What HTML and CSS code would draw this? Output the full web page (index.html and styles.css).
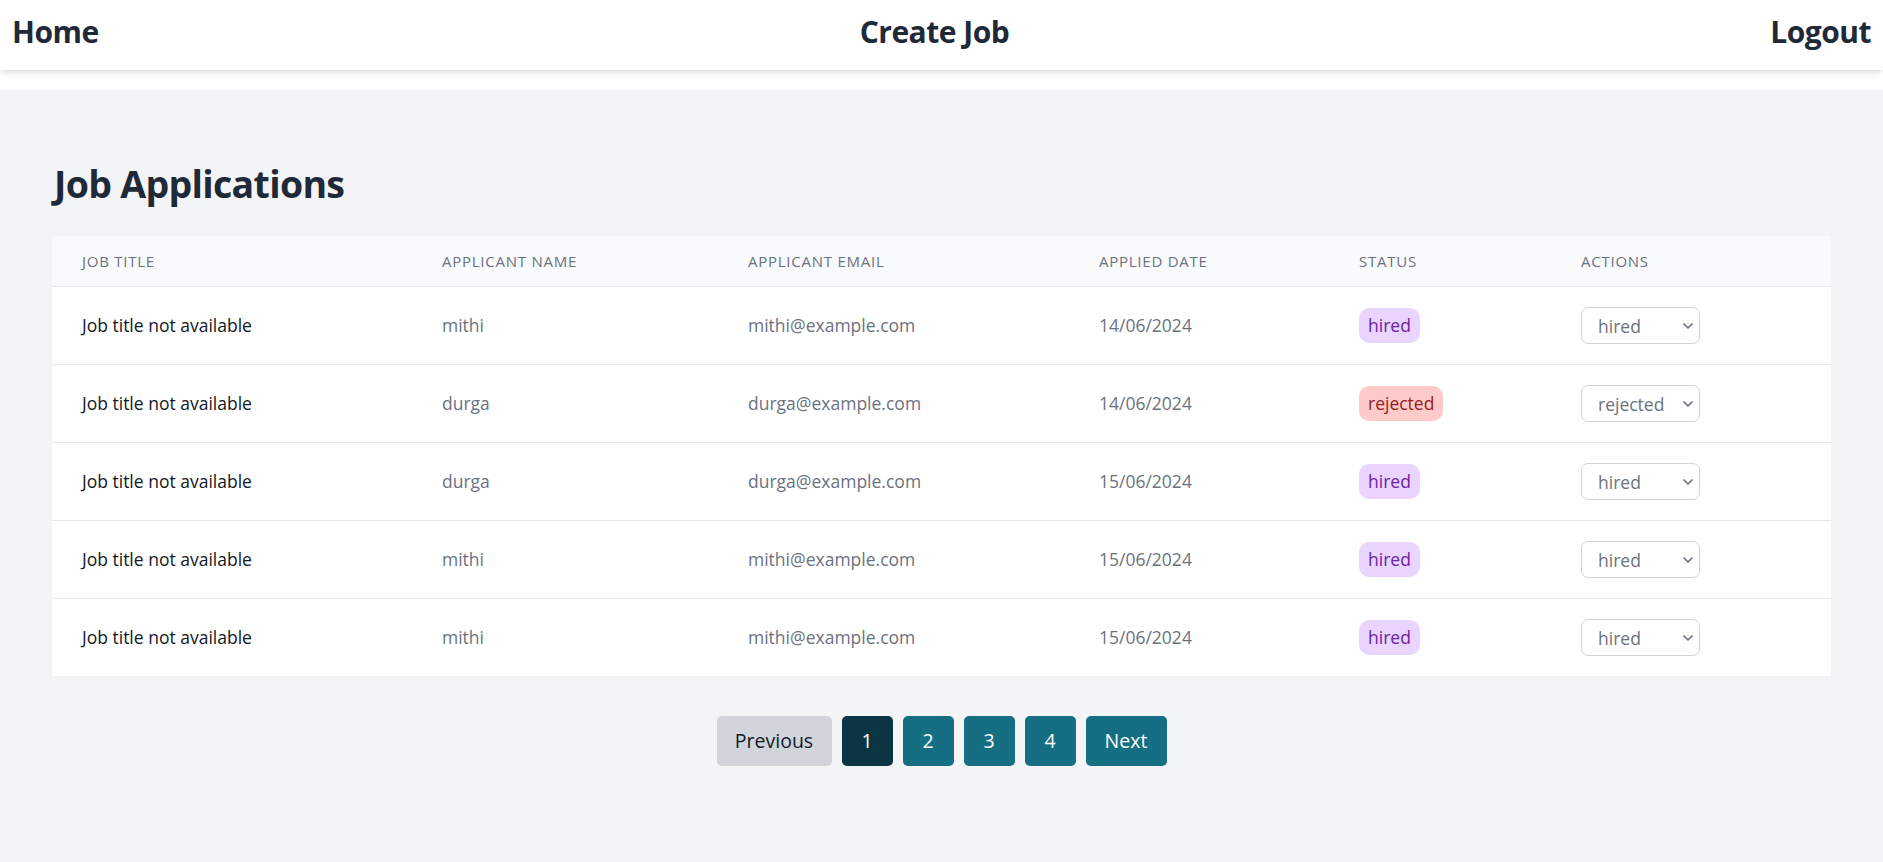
FILE: index.html
```html
<!DOCTYPE html>
<html lang="en">
<head>
<meta charset="utf-8">
<title>Job Applications</title>
<link rel="stylesheet" href="styles.css">
</head>
<body>
<nav class="navbar">
  <a class="nav-link" href="#">Home</a>
  <a class="nav-link" href="#">Create Job</a>
  <a class="nav-link" href="#">Logout</a>
</nav>
<main class="page">
  <h1 class="page-title">Job Applications</h1>
  <table class="apps">
    <colgroup>
      <col class="c1"><col class="c2"><col class="c3"><col class="c4"><col class="c5"><col class="c6">
    </colgroup>
    <thead>
      <tr>
        <th>Job Title</th>
        <th>Applicant Name</th>
        <th>Applicant Email</th>
        <th>Applied Date</th>
        <th>Status</th>
        <th>Actions</th>
      </tr>
    </thead>
    <tbody>
      <tr>
        <td class="title">Job title not available</td>
        <td>mithi</td>
        <td>mithi@example.com</td>
        <td>14/06/2024</td>
        <td><span class="badge hired">hired</span></td>
        <td><span class="select-wrap"><select class="status-select"><option>hired</option><option>rejected</option><option>pending</option></select><svg class="chev" viewBox="0 0 10 6" width="10" height="6"><path d="M1 1l4 4 4-4" fill="none" stroke="#6b7280" stroke-width="1.7" stroke-linecap="round" stroke-linejoin="round"/></svg></span></td>
      </tr>
      <tr>
        <td class="title">Job title not available</td>
        <td>durga</td>
        <td>durga@example.com</td>
        <td>14/06/2024</td>
        <td><span class="badge rejected">rejected</span></td>
        <td><span class="select-wrap"><select class="status-select"><option>rejected</option><option>hired</option><option>pending</option></select><svg class="chev" viewBox="0 0 10 6" width="10" height="6"><path d="M1 1l4 4 4-4" fill="none" stroke="#6b7280" stroke-width="1.7" stroke-linecap="round" stroke-linejoin="round"/></svg></span></td>
      </tr>
      <tr>
        <td class="title">Job title not available</td>
        <td>durga</td>
        <td>durga@example.com</td>
        <td>15/06/2024</td>
        <td><span class="badge hired">hired</span></td>
        <td><span class="select-wrap"><select class="status-select"><option>hired</option><option>rejected</option><option>pending</option></select><svg class="chev" viewBox="0 0 10 6" width="10" height="6"><path d="M1 1l4 4 4-4" fill="none" stroke="#6b7280" stroke-width="1.7" stroke-linecap="round" stroke-linejoin="round"/></svg></span></td>
      </tr>
      <tr>
        <td class="title">Job title not available</td>
        <td>mithi</td>
        <td>mithi@example.com</td>
        <td>15/06/2024</td>
        <td><span class="badge hired">hired</span></td>
        <td><span class="select-wrap"><select class="status-select"><option>hired</option><option>rejected</option><option>pending</option></select><svg class="chev" viewBox="0 0 10 6" width="10" height="6"><path d="M1 1l4 4 4-4" fill="none" stroke="#6b7280" stroke-width="1.7" stroke-linecap="round" stroke-linejoin="round"/></svg></span></td>
      </tr>
      <tr>
        <td class="title">Job title not available</td>
        <td>mithi</td>
        <td>mithi@example.com</td>
        <td>15/06/2024</td>
        <td><span class="badge hired">hired</span></td>
        <td><span class="select-wrap"><select class="status-select"><option>hired</option><option>rejected</option><option>pending</option></select><svg class="chev" viewBox="0 0 10 6" width="10" height="6"><path d="M1 1l4 4 4-4" fill="none" stroke="#6b7280" stroke-width="1.7" stroke-linecap="round" stroke-linejoin="round"/></svg></span></td>
      </tr>
    </tbody>
  </table>
  <div class="pagination">
    <button class="pg pg-prev">Previous</button>
    <button class="pg pg-num active">1</button>
    <button class="pg pg-num">2</button>
    <button class="pg pg-num">3</button>
    <button class="pg pg-num">4</button>
    <button class="pg pg-next">Next</button>
  </div>
</main>
</body>
</html>
```
FILE: styles.css
```css
* { box-sizing: border-box; }
html, body { margin: 0; padding: 0; }
body {
  background: #ffffff;
  font-family: "Open Sans", "Noto Sans", sans-serif;
  color: #1f2937;
  min-height: 862px;
  display: flex;
  flex-direction: column;
}
.navbar {
  height: 70px;
  display: flex;
  align-items: center;
  justify-content: space-between;
  padding: 0 12px 6px;
  background: #ffffff;
  box-shadow: 0 4px 6px -1px rgba(0,0,0,0.1), 0 2px 4px -2px rgba(0,0,0,0.1);
  position: relative;
  z-index: 1;
}
.nav-link {
  font-size: 30px;
  line-height: 40px;
  font-weight: 700;
  color: #1f2937;
  text-decoration: none;
  letter-spacing: -0.5px;
}
.page {
  flex: 1;
  margin-top: 20px;
  background: #f3f4f6;
  padding: 71px 52px 40px;
}
.page-title {
  margin: 0 0 30px 2px;
  font-size: 37.5px;
  line-height: 45px;
  font-weight: 700;
  color: #1f2937;
  letter-spacing: -0.7px;
}
.apps {
  width: 100%;
  table-layout: fixed;
  border-collapse: collapse;
  background: #ffffff;
}
.c1 { width: 360px; }
.c2 { width: 306px; }
.c3 { width: 351px; }
.c4 { width: 260px; }
.c5 { width: 222px; }
.c6 { width: 280px; }
.apps thead tr { background: #f9fafb; border-bottom: 1px solid #e5e7eb; }
.apps th {
  text-align: left;
  padding: 15px 30px;
  font-size: 15px;
  line-height: 20px;
  font-weight: 500;
  color: #6b7280;
  text-transform: uppercase;
  letter-spacing: 0.75px;
}
.apps tbody tr { border-bottom: 1px solid #e5e7eb; }
.apps tbody tr:last-child { border-bottom: none; }
.apps td {
  padding: 20px 30px;
  font-size: 17.5px;
  line-height: 25px;
  color: #6b7280;
  vertical-align: middle;
  white-space: nowrap;
}
.apps td.title { color: #111827; font-weight: 500; }
.badge {
  display: inline-block;
  padding: 5px 9px;
  border-radius: 10px;
  font-size: 17.5px;
  line-height: 25px;
}
.badge.hired { background: #e9d5ff; color: #6b21a8; }
.badge.rejected { background: #fecaca; color: #991b1b; }
.select-wrap {
  position: relative;
  display: inline-block;
  vertical-align: middle;
}
.status-select {
  appearance: none;
  -webkit-appearance: none;
  width: 119px;
  height: 37px;
  padding: 0 28px 0 16px;
  border: 1px solid #d1d5db;
  border-radius: 7px;
  background: #ffffff;
  font-family: inherit;
  font-size: 17.5px;
  color: #6b7280;
  display: block;
}
.chev {
  position: absolute;
  right: 7px;
  top: 16px;
  pointer-events: none;
}
.pagination {
  margin-top: 40px;
  display: flex;
  justify-content: center;
  gap: 10px;
}
.pg {
  height: 50px;
  padding: 0 20px 0;
  border: none;
  border-radius: 5px;
  font-family: inherit;
  font-size: 19.5px;
  line-height: 30px;
  color: #ffffff;
  background: #166e83;
  cursor: pointer;
}
.pg-num { width: 51px; padding: 0; }
.pg-next { width: 81px; padding: 0; }
.pg.active { background: #0b3542; }
.pg-prev { background: #d1d5db; color: #111827; width: 115px; padding: 0; }
```
